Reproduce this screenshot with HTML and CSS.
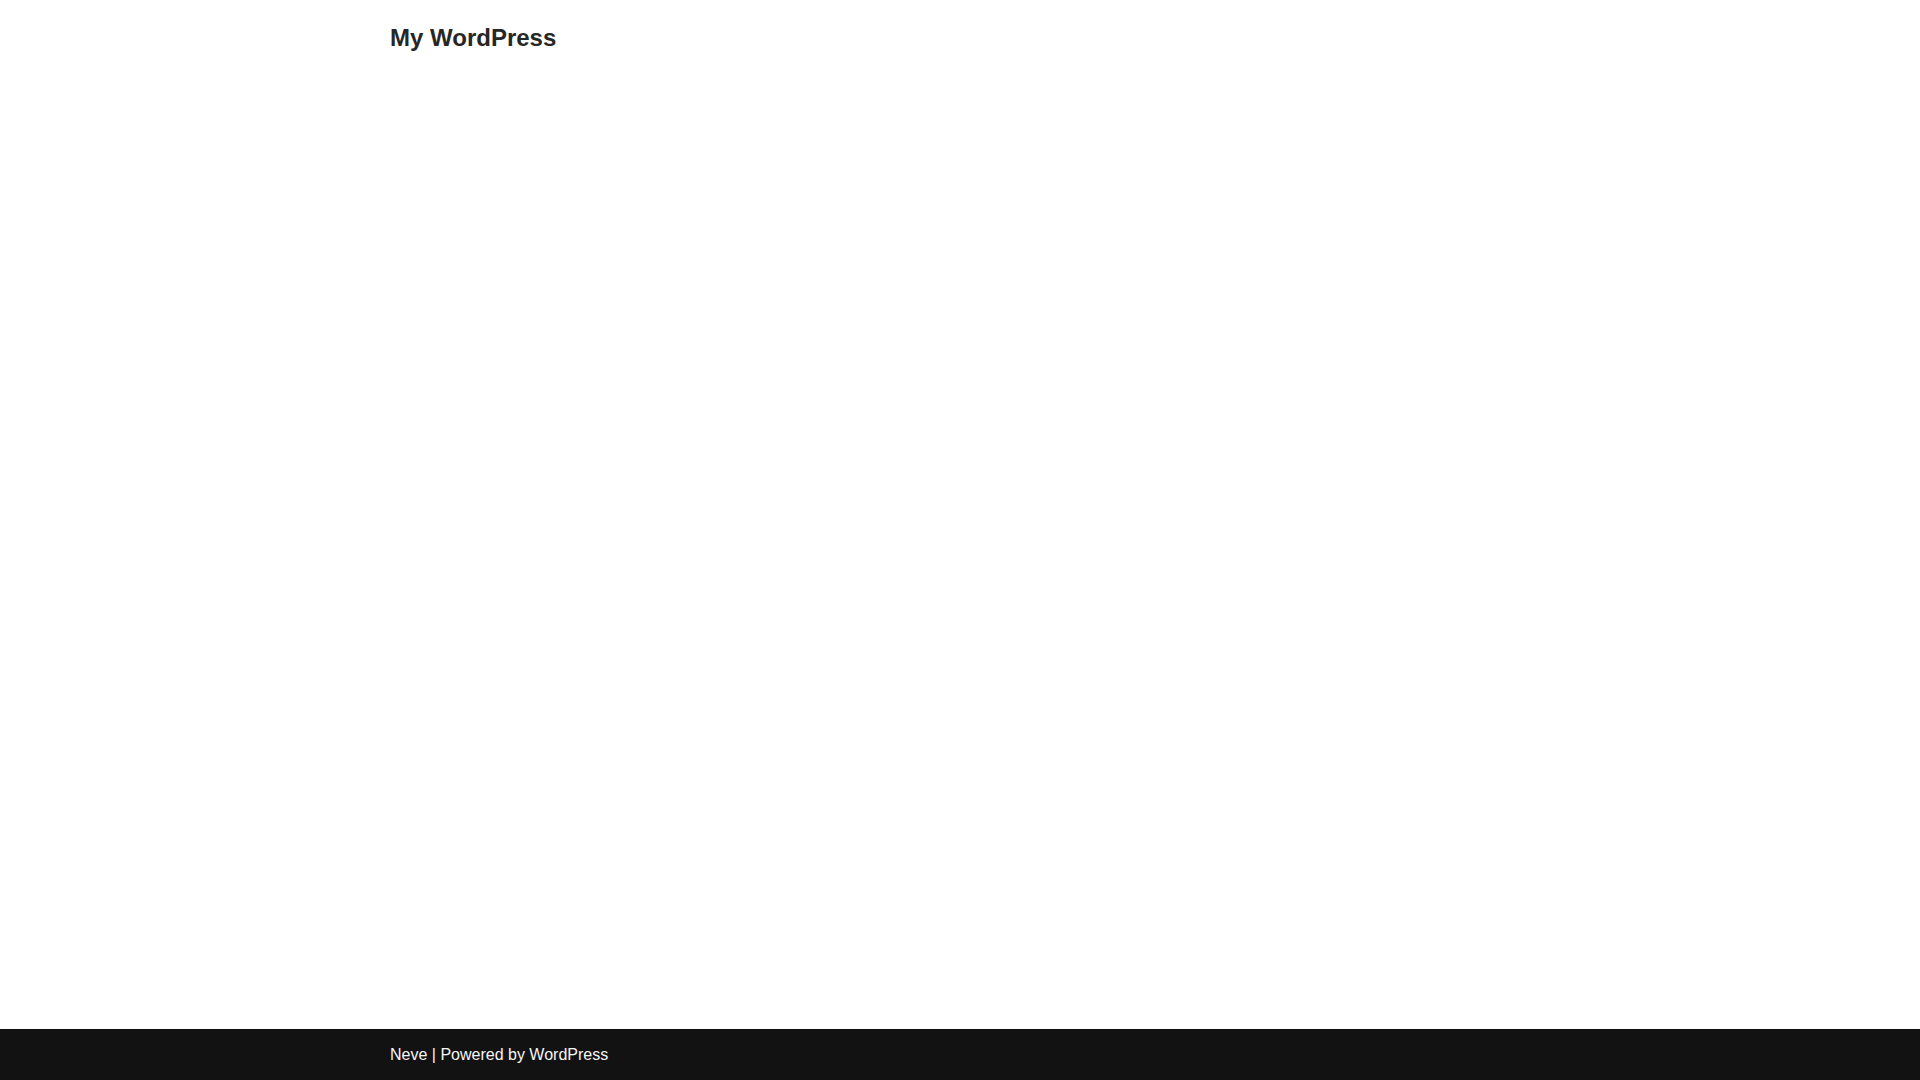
FILE: index.html
```html
<!DOCTYPE html>
<html lang="en">
<head>
<meta charset="utf-8">
<meta name="viewport" content="width=device-width, initial-scale=1">
<title>My WordPress</title>
<link rel="stylesheet" href="styles.css">
</head>
<body>
<div class="wrapper">
  <header class="site-header">
    <div class="container">
      <a class="brand" href="#"><p class="site-title">My WordPress</p></a>
    </div>
  </header>
  <main class="site-main"></main>
  <footer class="site-footer">
    <div class="container">
      <p class="credits"><a href="#">Neve</a> | Powered by <a href="#">WordPress</a></p>
    </div>
  </footer>
</div>
</body>
</html>
```
FILE: styles.css
```css
* {
  box-sizing: border-box;
}

body {
  margin: 0;
  background: #fff;
  color: #272626;
  font-family: "Liberation Sans", Arial, Helvetica, sans-serif;
  font-size: 16px;
  line-height: 27px;
}

a {
  color: inherit;
  text-decoration: none;
}

p {
  margin: 0;
}

.wrapper {
  display: flex;
  flex-direction: column;
  min-height: 100vh;
}

.container {
  width: 100%;
  max-width: 1170px;
  margin: 0 auto;
  padding: 0 15px;
}

.site-header {
  padding: 18px 0;
}

.brand {
  display: inline-block;
}

.site-title {
  font-size: 24px;
  font-weight: 700;
  line-height: 40px;
}

.site-main {
  flex: 1;
}

.site-footer {
  padding: 12px 0;
  background: #121212;
  color: #f5f5f5;
}
```
